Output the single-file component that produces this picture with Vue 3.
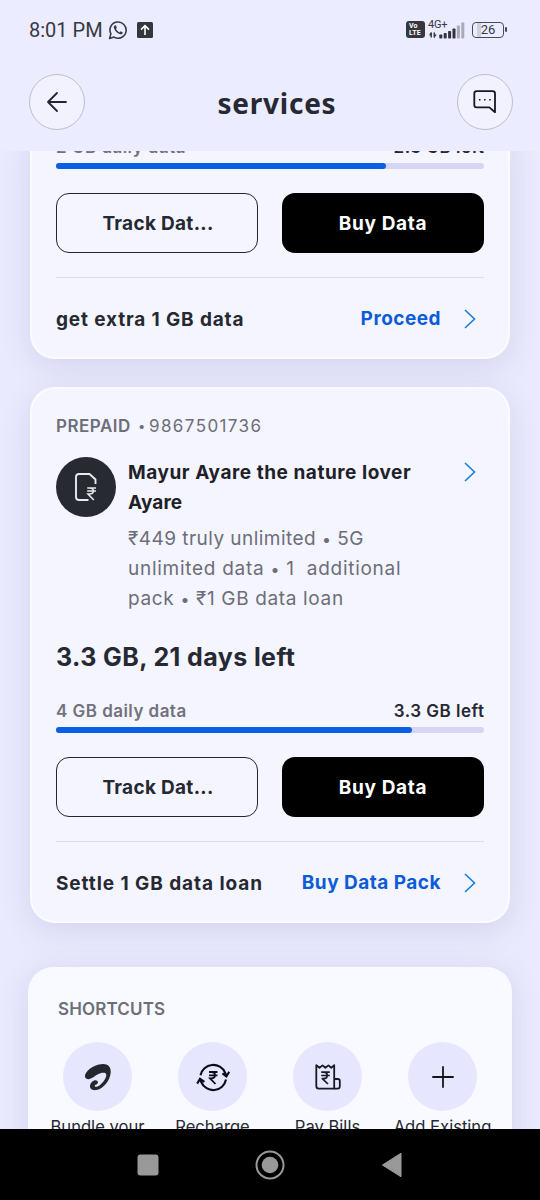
<script setup>
const shortcuts = [
  { label: 'Bundle your', icon: 'bundle' },
  { label: 'Recharge', icon: 'recharge' },
  { label: 'Pay Bills', icon: 'bill' },
  { label: 'Add Existing', icon: 'plus' },
]
const signal = [4, 5.5, 7.5, 10, 13, 16]
</script>

<template>
  <div class="phone">
    <div class="status">
      <span class="time">8:01 PM</span>
      <svg class="wa" viewBox="0 0 20 20" width="20" height="20">
        <path d="M1.6 18.4 L2.9 13.9 A8.1 8.1 0 1 1 6 17.1 Z" fill="none" stroke="#383940" stroke-width="1.6" stroke-linejoin="round" />
        <path d="M7.2 5.2 C6 5.6 5.5 6.8 6 8.2 C7 11.2 9 13.3 12 14.2 C13.4 14.5 14.6 13.8 14.8 12.4 L12.6 11.2 L11.5 12.4 C10 11.8 8.8 10.6 8 9 L8.8 7.8 L8 5.4 Z" fill="#383940" />
      </svg>
      <svg class="up" viewBox="0 0 16 16" width="16" height="16">
        <rect width="16" height="16" rx="1.5" fill="#36373e" />
        <path d="M8 13V4M4 7.6L8 3.7L12 7.6" fill="none" stroke="#fff" stroke-width="1.6" />
      </svg>
      <div class="grow"></div>
      <div class="volte"><span>Vo</span><span>LTE</span></div>
      <div class="net">
        <span class="gen">4G+</span>
        <svg class="bars" viewBox="0 0 37 17" width="37" height="17">
          <path d="M3.2 15.5V10.5M6.3 10.5V15.5" stroke="#383940" stroke-width="1.5" />
          <path d="M.8 13.3L3.2 10V13.3ZM8.7 12.6L6.3 16V12.6Z" fill="#383940" />
          <rect v-for="(h, i) in signal" :key="i" :x="11.3 + i * 4.4" :y="16.5 - h" width="3" :height="h" rx="0.7" :fill="i < 4 ? '#33343b' : '#a9a9b8'" />
        </svg>
      </div>
      <div class="battery"><span>26</span></div>
      <i class="cap"></i>
    </div>

    <header class="header">
      <button class="round">
        <svg viewBox="0 0 24 24" width="24" height="24" fill="none" stroke="#23262e" stroke-width="1.8" stroke-linecap="round" stroke-linejoin="round"><path d="M21 12H3M12 3L3 12L12 21" /></svg>
      </button>
      <h1>services</h1>
      <button class="round">
        <svg viewBox="0 0 26 26" width="26" height="26" fill="none" stroke="#16181f" stroke-width="1.8" stroke-linejoin="round">
          <path d="M4.7 2.2H20.6Q23 2.2 23 4.6V23.2L17.4 18.4H4.7Q2.3 18.4 2.3 16V4.6Q2.3 2.2 4.7 2.2Z" />
          <path d="M7 10.8h1.5M12 10.8h1.5M17.2 10.8h1.5" stroke-width="1.6" />
        </svg>
      </button>
    </header>

    <main class="scroller">
      <section class="card first">
        <div class="usage"><span class="muted">2 GB daily data</span><span class="left">2.3 GB left</span></div>
        <div class="track"><div class="fill f1"></div></div>
        <div class="actions"><button class="btn line"><span>Track Dat...</span></button><button class="btn dark"><span>Buy Data</span></button></div>
        <div class="foot">
          <span class="prompt extra">get extra 1 GB data</span>
          <a class="link">Proceed</a>
          <svg class="chev" viewBox="0 0 12 20" width="12" height="20"><path d="M1 1L10.5 10L1 19" /></svg>
        </div>
      </section>

      <section class="card second">
        <div class="kind"><b>PREPAID</b><span class="dot">•</span><span class="num">9867501736</span></div>
        <div class="info">
          <div class="avatar">
            <svg viewBox="0 0 24 30" width="24" height="30" fill="none" stroke="#e9e9ee" stroke-width="1.9">
              <path d="M14.5 28H5Q2 28 2 25V5Q2 2 5 2H15.5L21.5 7.5V12" />
              <path d="M13.2 16H22M13.2 19H22M13.2 16H15.5Q19.3 16 19.3 19Q19.3 22 15.5 22H14L19.8 28" stroke-width="1.6" />
            </svg>
          </div>
          <div class="about">
            <h2><span class="n1">Mayur Ayare the nature lover</span><br><span class="n2">Ayare</span></h2>
            <p><span class="d1">₹449 truly unlimited <i>•</i> 5G</span><br><span class="d2">unlimited data <i>•</i> 1&nbsp; additional</span><br><span class="d3">pack <i>•</i> ₹1 GB data loan</span></p>
          </div>
          <svg class="chev" viewBox="0 0 12 20" width="12" height="20"><path d="M1 1L10.5 10L1 19" /></svg>
        </div>
        <h3>3.3 GB, 21 days left</h3>
        <div class="usage"><span class="muted">4 GB daily data</span><span class="left">3.3 GB left</span></div>
        <div class="track"><div class="fill f2"></div></div>
        <div class="actions"><button class="btn line"><span>Track Dat...</span></button><button class="btn dark"><span>Buy Data</span></button></div>
        <div class="foot">
          <span class="prompt settle">Settle 1 GB data loan</span>
          <a class="link">Buy Data Pack</a>
          <svg class="chev" viewBox="0 0 12 20" width="12" height="20"><path d="M1 1L10.5 10L1 19" /></svg>
        </div>
      </section>

      <section class="shortcuts">
        <h4>SHORTCUTS</h4>
        <div class="grid">
          <div v-for="s in shortcuts" :key="s.label" class="item">
            <div class="disc">
              <svg v-if="s.icon === 'bundle'" viewBox="0 0 28 28" width="28" height="28">
                <path d="M1.2 11.5C4 5.5 12 1 19.5 1C24.5 1 27 4.5 26.7 9.5C26.2 17 20 25.5 12.5 27C8.5 27.7 5.7 26 6 22.8C6.5 19.5 9 17.2 11.7 17.2C14 17.3 14.6 19.2 13.3 20.8C12.2 22 10.6 21.8 10.7 23C11 24.4 13.4 23.9 15.5 22.4C19 20 22.5 14.5 22.3 11.8C22 9 18 9.4 14.5 11C11 12.5 8.5 15.5 4.8 16.2C1.8 16.4 .4 14.2 1.2 11.5Z" fill="#24272e" />
              </svg>
              <svg v-else-if="s.icon === 'recharge'" viewBox="0 0 34 30" width="34" height="30" fill="none" stroke="#0c0d16" stroke-width="2.1">
                <path d="M4.5 13.3A13 13 0 0 1 29.2 10.8L30.3 14M26.4 11.4L30.4 14.4L33.2 9.8" />
                <path d="M30 17.5A13 13 0 0 1 5.2 20L4 17M1.2 21.6L4 16.8L8.4 19.8" />
                <path d="M13 10H21.5M13 13.3H21.5M13 10H15.5Q19 10 19 13.3Q19 16.3 15.2 16.3H14L19.5 22" stroke-width="1.8" />
              </svg>
              <svg v-else-if="s.icon === 'bill'" viewBox="0 0 28 28" width="28" height="28" fill="none" stroke="#171923" stroke-width="1.8" stroke-linejoin="round">
                <path d="M2.3 2.2L5.5 4.8L8.6 2.4L11.4 4.8L14.4 2.4L17.3 4.8L20.2 2.2V25.6H4.8Q2.3 25.6 2.3 23Z" />
                <path d="M20.2 16H23.8Q25.8 16 25.8 18V23.2Q25.8 25.6 23.4 25.6H20" />
                <path d="M7.2 9.2H15.8M7.2 12.5H15.8M7.2 9.2H9.5Q13.2 9.2 13.2 12.5Q13.2 15.6 9.5 15.6H8.3L14 21" stroke-width="1.7" />
              </svg>
              <svg v-else viewBox="0 0 24 24" width="24" height="24"><path d="M12 1.3V22.7M1.3 12H22.7" stroke="#14161c" stroke-width="1.8" /></svg>
            </div>
            <span>{{ s.label }}</span>
          </div>
        </div>
      </section>
    </main>

    <nav class="nav">
      <svg viewBox="0 0 22 22" width="22" height="22"><rect x=".5" y=".5" width="21" height="21" rx="3" fill="#999" /></svg>
      <svg viewBox="0 0 30 30" width="30" height="30"><circle cx="15" cy="15" r="13.5" fill="none" stroke="#999" stroke-width="2" /><circle cx="15" cy="15" r="8.3" fill="#999" /></svg>
      <svg viewBox="0 0 22 26" width="22" height="26"><path d="M20 1.2V24.8L1.4 13Z" fill="#999" stroke="#999" stroke-linejoin="round" /></svg>
    </nav>
  </div>
</template>

<style>
html, body { margin: 0; background: #ebecff; }
</style>

<style scoped>
* { box-sizing: border-box; }
.phone { width: 540px; height: 1200px; overflow: hidden; display: flex; flex-direction: column; background: #e9eafd; font-family: Inter, "Noto Sans", sans-serif; color: #262932; }
span, a, h1, h3, h4, b { white-space: nowrap; }
h1, h2, h3, h4, p { margin: 0; }
button { font: inherit; padding: 0; }
svg { display: block; flex: none; }

.status { height: 58px; flex: none; display: flex; align-items: center; padding: 1px 33px 0 29px; background: #ebecff; }
.time { font: 400 20px/24px Roboto, sans-serif; color: #383940; width: 79px; }
.up { margin-left: 9px; }
.grow { flex: 1; }
.volte { width: 19px; height: 17px; border-radius: 3px; background: #36373e; color: #fff; font: 700 7px/7px Roboto, sans-serif; display: flex; flex-direction: column; padding: 2px 0 0 3px; letter-spacing: .2px; }
.net { position: relative; width: 37px; height: 18px; margin-left: 3px; }
.gen { position: absolute; left: 0; top: -2px; font: 400 11px/12px Roboto, sans-serif; letter-spacing: -.2px; color: #383940; }
.bars { position: absolute; left: 0; top: 1px; }
.battery { width: 32px; height: 16px; border: 1.5px solid #4a4b55; border-radius: 4px; margin-left: 7px; font: 400 13px/14px Roboto, sans-serif; color: #383940; text-align: center; background: linear-gradient(90deg, transparent 4px, #cfcfdd 4px 8px, transparent 8px); }
.cap { width: 2px; height: 5px; background: #4a4b55; border-radius: 1px; margin-left: 1px; }

.header { height: 93px; flex: none; display: flex; justify-content: space-between; align-items: flex-start; padding: 16px 27px 0 29px; background: #ebecff; }
.round { width: 56px; height: 56px; border-radius: 50%; border: 1.3px solid #bdbdcb; background: #f2f2ff; display: flex; align-items: center; justify-content: center; }
h1 { font: 700 28px/38px "Noto Sans", sans-serif; margin: 10px 0 0 12px; letter-spacing: .75px; }

.scroller { flex: 1; min-height: 0; overflow: hidden; display: flex; flex-direction: column; }
.card { flex: none; margin: 0 30px; padding: 0 24px; border: 2px solid #fbfbff; border-radius: 25px; background: #f4f5ff; box-shadow: 0 8px 30px rgba(80, 80, 140, .13); }
.first { margin-top: -28px; padding-top: 10px; height: 236px; }
.second { margin-top: 28px; padding-top: 25px; height: 536px; }
.kind { height: 24px; line-height: 24px; font-size: 17px; color: #6d6e78; display: flex; }
.kind b { font-weight: 600; width: 82px; letter-spacing: .5px; }
.dot { width: 11px; font-size: 13px; }
.num { letter-spacing: 1.4px; }
.info { display: flex; margin-top: 19px; height: 182px; }
.avatar { width: 60px; height: 60px; border-radius: 50%; background: #272a31; display: flex; align-items: center; justify-content: center; }
.about { flex: 1; padding: 1px 0 0 12px; }
.about h2 { font-size: 19px; line-height: 30px; font-weight: 700; color: #1f2129; }
.n1 { letter-spacing: .54px; }
.n2 { letter-spacing: .1px; }
.about p { font-size: 19px; line-height: 30px; margin-top: 6px; color: #6d6e78; white-space: nowrap; }
.about i { font-style: normal; font-size: 16px; line-height: 1; }
.d1 { letter-spacing: .46px; }
.d2 { letter-spacing: .72px; }
.d3 { letter-spacing: .65px; }
.chev { fill: none; stroke: #1a7ddb; stroke-width: 1.6; }
.info .chev { margin: 5px 8px 0 0; }
h3 { font-size: 25px; line-height: 36px; font-weight: 650; height: 60px; letter-spacing: .4px; }
.usage { display: flex; justify-content: space-between; height: 24px; line-height: 24px; font-size: 17px; font-weight: 600; }
.muted { color: #71727c; letter-spacing: .46px; }
.left { letter-spacing: .5px; margin-right: -.5px; }
.track { height: 6px; margin-top: 4px; border-radius: 3px; background: #d5d5f4; }
.fill { height: 6px; border-radius: 3px; background: #0a5fe4; }
.f1 { width: 330px; }
.f2 { width: 356px; }
.actions { display: flex; justify-content: space-between; margin-top: 24px; }
.btn { height: 60px; width: 202px; border-radius: 13px; font-size: 19px; font-weight: 700; letter-spacing: .3px; }
.line { border: 1.5px solid #24262e; background: transparent; color: #262932; padding-left: 2px; }
.dark { border: 0; background: #000; color: #fff; letter-spacing: .65px; }
.foot { margin-top: 24px; border-top: 1px solid #dcdce9; height: 82px; display: flex; align-items: center; font-size: 19px; font-weight: 700; padding-right: 8px; }
.prompt { flex: 1; padding-top: 2px; }
.extra { letter-spacing: .86px; }
.settle { letter-spacing: .93px; }
.link { color: #0c5cd8; margin-right: 23px; letter-spacing: .48px; }

.shortcuts { flex: none; margin: 44px 28px 0; height: 300px; border-radius: 25px; background: #f9faff; box-shadow: 0 4px 30px rgba(80, 80, 140, .13); padding: 29px 12px 0; }
h4 { font-size: 17px; line-height: 26px; font-weight: 600; color: #6d6e78; padding-left: 18px; letter-spacing: .15px; }
.grid { display: grid; grid-template-columns: repeat(4, 115px); margin-top: 20px; }
.item { display: flex; flex-direction: column; align-items: center; font-size: 16.6px; line-height: 24px; }
.disc { width: 69px; height: 69px; border-radius: 50%; background: #e6e6ff; display: flex; align-items: center; justify-content: center; margin-bottom: 4px; }

.nav { height: 71px; flex: none; background: #000; display: flex; align-items: center; justify-content: center; gap: 96px; }
</style>
